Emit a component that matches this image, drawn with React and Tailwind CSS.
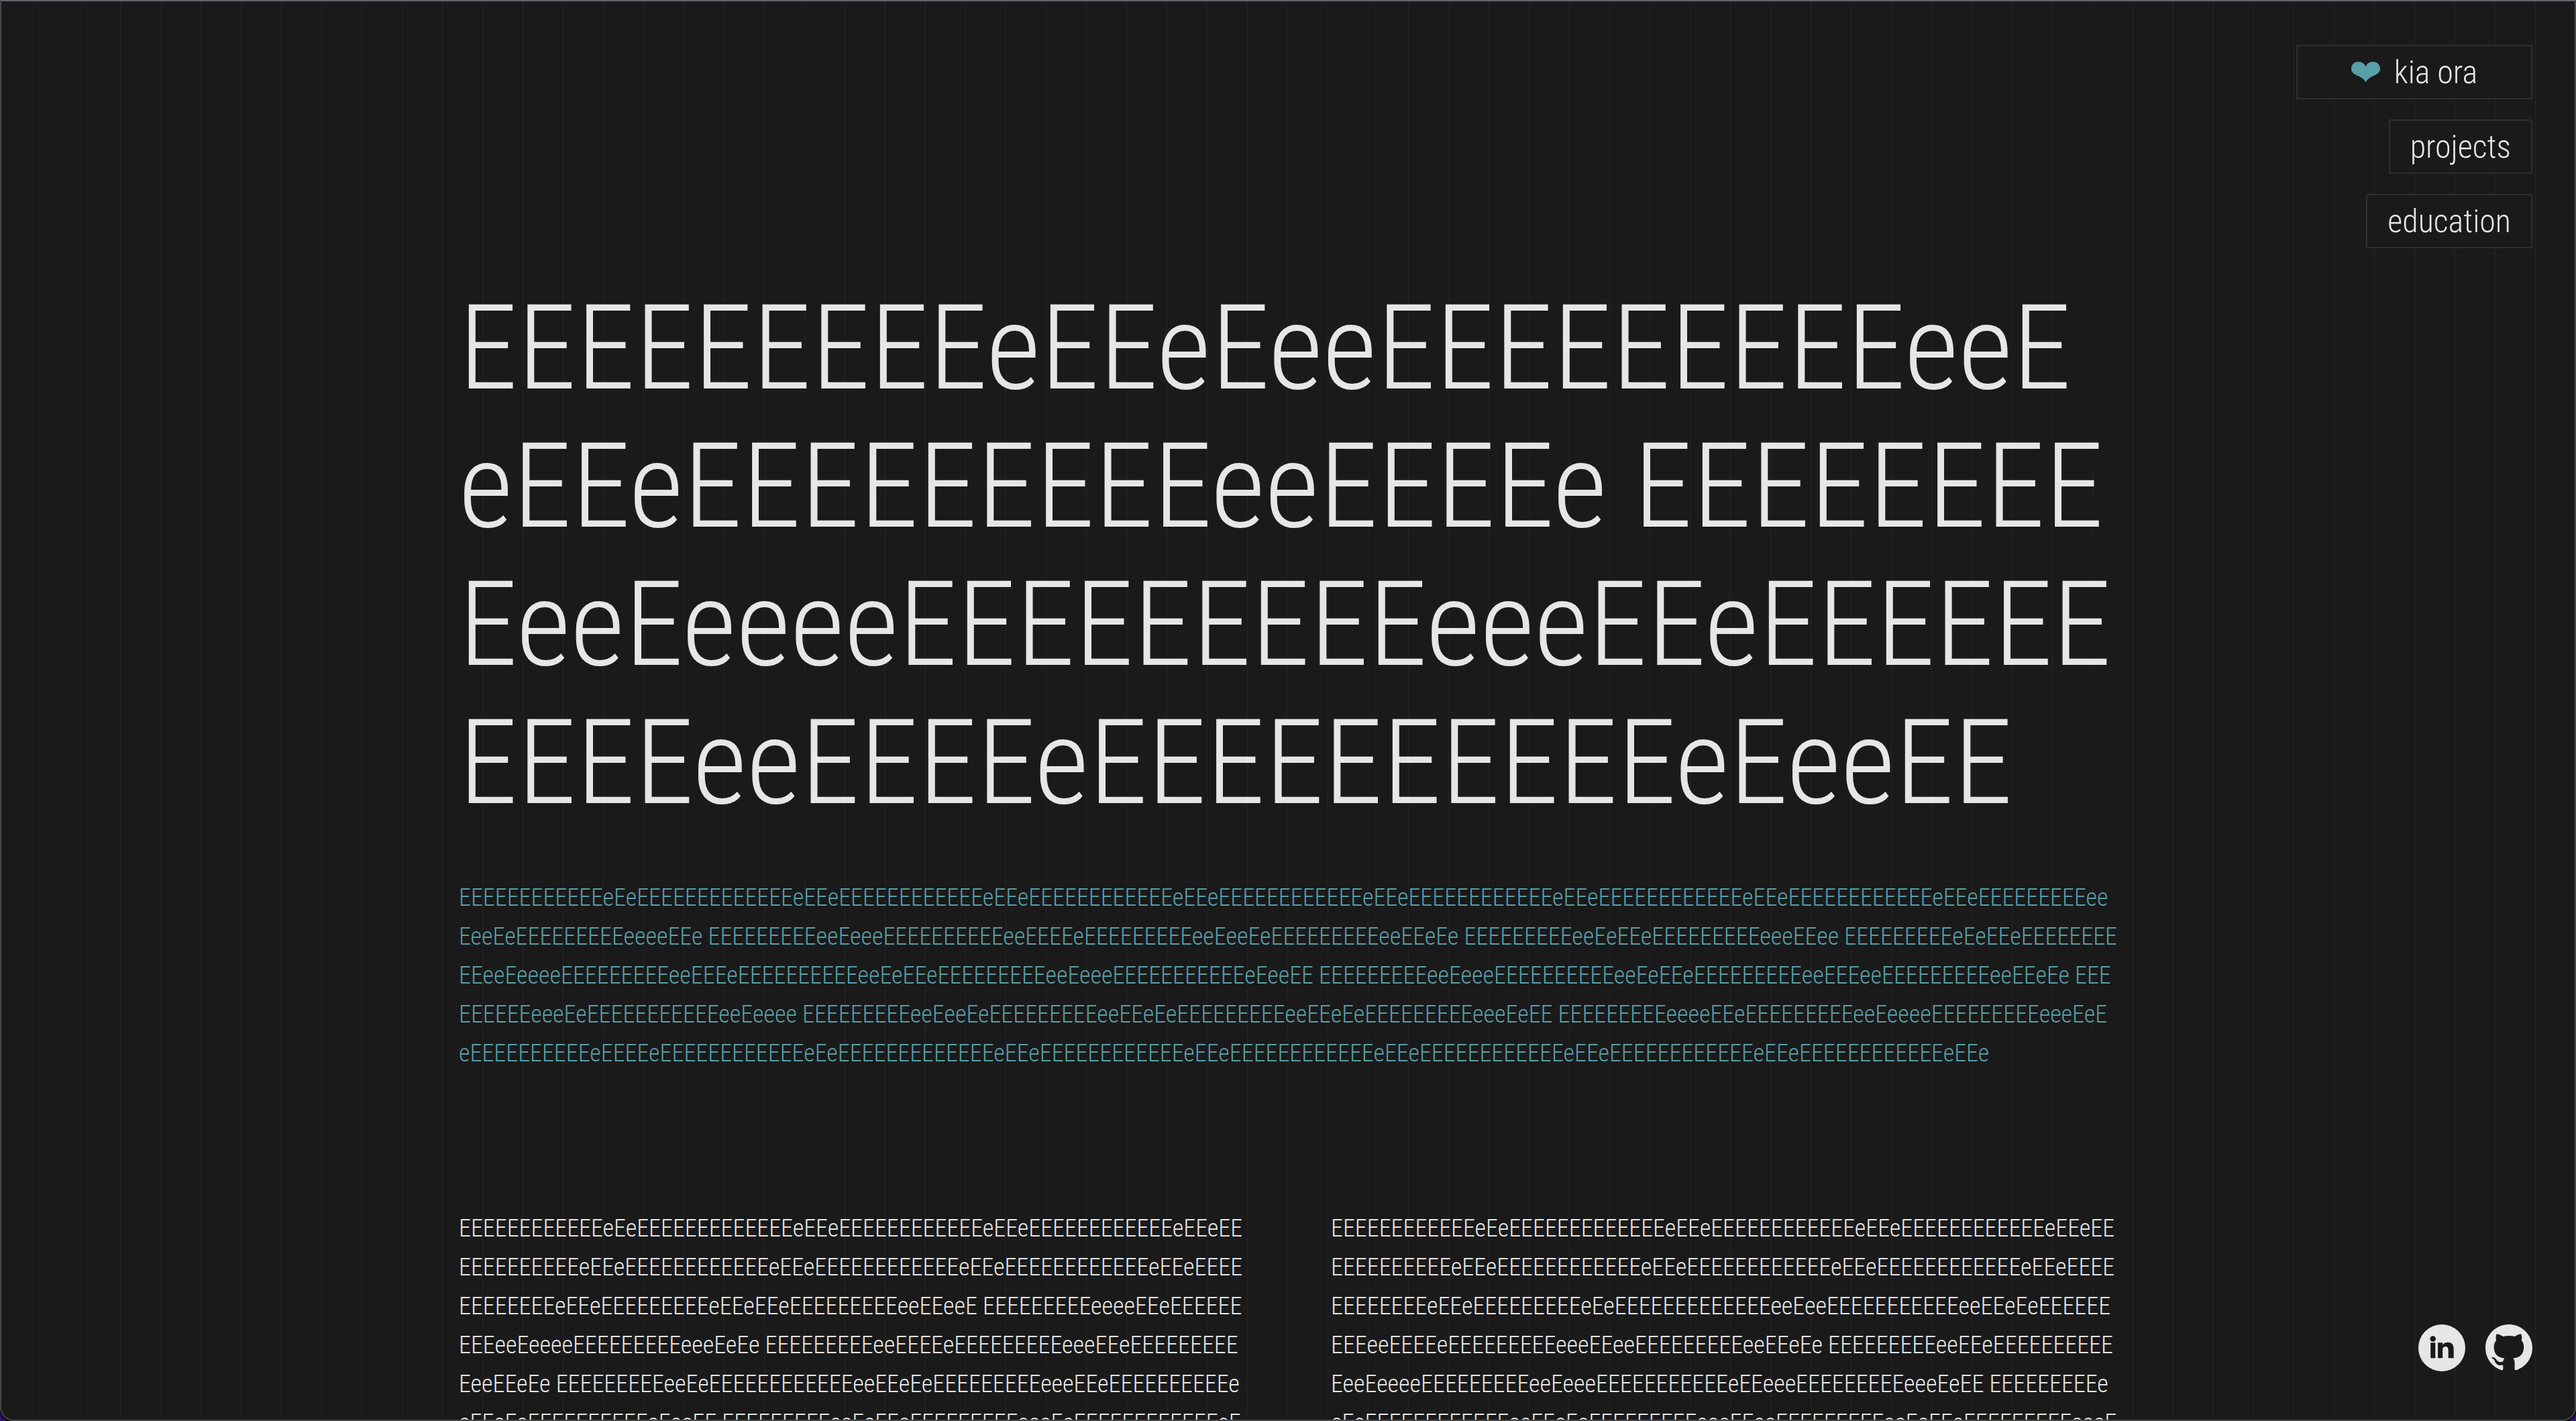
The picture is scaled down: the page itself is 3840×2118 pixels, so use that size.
const E = (n) => "E".repeat(n);

const heading =
  E(9) + "eEEeEee" + E(9) + "eeE" +
  "eEEe" + E(9) + "ee" + E(4) + "e " + E(9) +
  "eeEeeee" + E(9) + "eeeEEe" + E(10) +
  "ee" + E(4) + "e" + E(10) + "eEeeEE";

const intro =
  E(12) + "eEe" + E(13) + ("eEEe" + E(12)).repeat(6) + "eEEe" + E(9) + "ee" +
  "EeeEe" + E(9) + "eeeeEEe " + E(9) + "eeEeee" + E(10) + "ee" + E(4) + "e" + E(9) + "eeEeeEe" + E(9) + "eeEEeEe " + E(9) + "eeEeEEe" + E(9) + "eeeEEee " + E(9) + "eEeEEe" + E(8) +
  "EEeeEeeee" + E(9) + "eeEEEe" + E(10) + "eeEeEEe" + E(9) + "eeEeee" + E(11) + "eEeeEE " + E(9) + "eeEeee" + E(10) + "eeEeEEe" + E(9) + "eeEEEee" + E(9) + "eeEEeEe " + E(3) +
  E(6) + "eeeEe" + E(11) + "eeEeeee " + E(9) + "eeEeeEe" + E(9) + "eeEEeEe" + E(9) + "eeEEeEe" + E(9) + "eeeEeEE " + E(9) + "eeeeEEe" + E(9) + "eeEeeee" + E(9) + "eeeEeE" +
  "e" + E(10) + "e" + E(4) + "e" + E(12) + "eEe" + E(13) + ("eEEe" + E(12)).repeat(5) + "eEEe";

const opening =
  E(12) + "eEe" + E(13) + ("eEEe" + E(12)).repeat(2) + "eEEeEE" +
  E(10) + ("eEEe" + E(12)).repeat(3) + "eEEe" + E(4);

const columns = [
  opening +
    E(8) + "eEEe" + E(9) + "eEEeEEe" + E(9) + "eeEEeeE " + E(9) + "eeeeEEe" + E(6) +
    "EEEeeEeeee" + E(9) + "eeeEeEe " + E(9) + "eeEEEEe" + E(9) + "eeeEEe" + E(9) +
    "EeeEEeEe " + E(9) + "eeEe" + E(12) + "eeEEeEe" + E(9) + "eeeEEe" + E(10) + "e" +
    "eEEeEe" + E(10) + "eEeeEE " + E(9) + "eeEeEEe" + E(9) + "eeeEe" + E(12) + "eE",
  opening +
    E(8) + "eEEe" + E(9) + "eEe" + E(13) + "eeEee" + E(11) + "eeEEeEe" + E(6) +
    "EEEeeEEEEe" + E(9) + "eeeEEee" + E(9) + "eeEEeEe " + E(9) + "eeEEe" + E(10) +
    "EeeEeeee" + E(9) + "eeEeee" + E(11) + "eEEeee" + E(9) + "eeeEeEE " + E(9) + "e" +
    "eEe" + E(12) + "eeEEeEe" + E(9) + "eeeEEee" + E(9) + "eeEeEEe" + E(9) + "eeeE",
];

function Heart() {
  return (
    <svg viewBox="0 0 43 31" className="h-[31px] w-[43px] fill-[#589fa8]" aria-hidden="true">
      <path d="M21.5 31C20.5 27.5 17 24.5 11 21.5C4 18.5 0 16 0 10.5C0 4.500 4.500 0 10.500 0C16 0 20.500 3 21.500 8C22.500 3 27 0 32.500 0C38.500 0 43 4.500 43 10.500C43 16 39 18.500 32 21.500C26 24.500 22.500 27.500 21.500 31Z" />
    </svg>
  );
}

function LinkedIn() {
  return (
    <svg viewBox="0 0 70 70" className="size-[70px] fill-[#e6e6e6]" aria-hidden="true">
      <path
        fillRule="evenodd"
        d="M35 0a35 35 0 1 1 0 70a35 35 0 1 1 0-70ZM21.700 17.300a4.250 4.250 0 1 0 0 8.500a4.250 4.250 0 1 0 0-8.500ZM18.200 27.300V50.200H25.300V27.300ZM29.100 27.300V50.200H36.200V38.900C36.200 35.900 36.800 33 40.500 33C44.200 33 44.700 36.400 44.700 39.100V50.200H52.700V37.600C52.700 31.400 50.900 26.700 43.600 26.700C40.100 26.700 37.300 28.600 36.500 30.400H36.200V27.300Z"
      />
    </svg>
  );
}

function GitHub() {
  return (
    <svg viewBox="0 0.297 24 24" className="size-[70px] fill-[#e6e6e6]" aria-hidden="true">
      <path d="M12 .297c-6.63 0-12 5.373-12 12 0 5.303 3.438 9.8 8.205 11.385.6.113.82-.258.82-.577 0-.285-.01-1.04-.015-2.04-3.338.724-4.042-1.61-4.042-1.61C4.422 18.07 3.633 17.7 3.633 17.7c-1.087-.744.084-.729.084-.729 1.205.084 1.838 1.236 1.838 1.236 1.07 1.835 2.809 1.305 3.495.998.108-.776.417-1.305.76-1.605-2.665-.3-5.466-1.332-5.466-5.93 0-1.31.465-2.38 1.235-3.22-.135-.303-.54-1.523.105-3.176 0 0 1.005-.322 3.3 1.23.96-.267 1.98-.399 3-.405 1.02.006 2.04.138 3 .405 2.28-1.552 3.285-1.23 3.285-1.23.645 1.653.24 2.873.12 3.176.765.84 1.23 1.91 1.23 3.22 0 4.61-2.805 5.625-5.475 5.92.42.36.81 1.096.81 2.22 0 1.606-.015 2.896-.015 3.286 0 .315.21.69.825.57C20.565 22.092 24 17.592 24 12.297c0-6.627-5.373-12-12-12" />
    </svg>
  );
}

const navBox = "flex items-center border-2 border-[#2f2f2f] bg-[#1a1a1a] py-[10px]";

export default function App() {
  return (
    <div className="relative h-screen overflow-hidden bg-[#1a1a1a] bg-[repeating-linear-gradient(to_right,transparent_0,transparent_59px,#242424_59px,#242424_60px)] font-['Roboto_Condensed','Roboto',sans-serif] font-light text-[#e6e6e6]">
      <nav className="fixed right-[65px] top-[67px] flex flex-col items-end gap-[30px] text-[48px] leading-[57px]">
        <a href="#home" className={navBox + " gap-[21px] px-20"}>
          <Heart />
          kia ora
        </a>
        <a href="#projects" className={navBox + " px-[30px]"}>projects</a>
        <a href="#education" className={navBox + " px-[30px]"}>education</a>
      </nav>

      <main className="mx-auto max-w-[2600px] break-all px-16 pt-[416px]">
        <h1 className="text-[176px] leading-[206px]">{heading}</h1>
        <p className="mt-[69px] text-[36px] leading-[58px] text-[#589fa8]">{intro}</p>
        <div className="mt-[203px] grid grid-cols-2 gap-32 text-[36px] leading-[58px]">
          {columns.map((text, i) => (
            <p key={i}>{text}</p>
          ))}
        </div>
      </main>

      <footer className="fixed bottom-[74px] right-[65px] flex gap-[30px]">
        <a href="#linkedin" aria-label="LinkedIn"><LinkedIn /></a>
        <a href="#github" aria-label="GitHub"><GitHub /></a>
      </footer>

      <div className="pointer-events-none fixed inset-0 overflow-hidden">
        <div className="size-full rounded-b-[20px] border-2 border-[#484848] border-t-[#646368] shadow-[0_0_0_2px_#000000,0_0_0_40px_#2d1573]" />
      </div>
    </div>
  );
}
